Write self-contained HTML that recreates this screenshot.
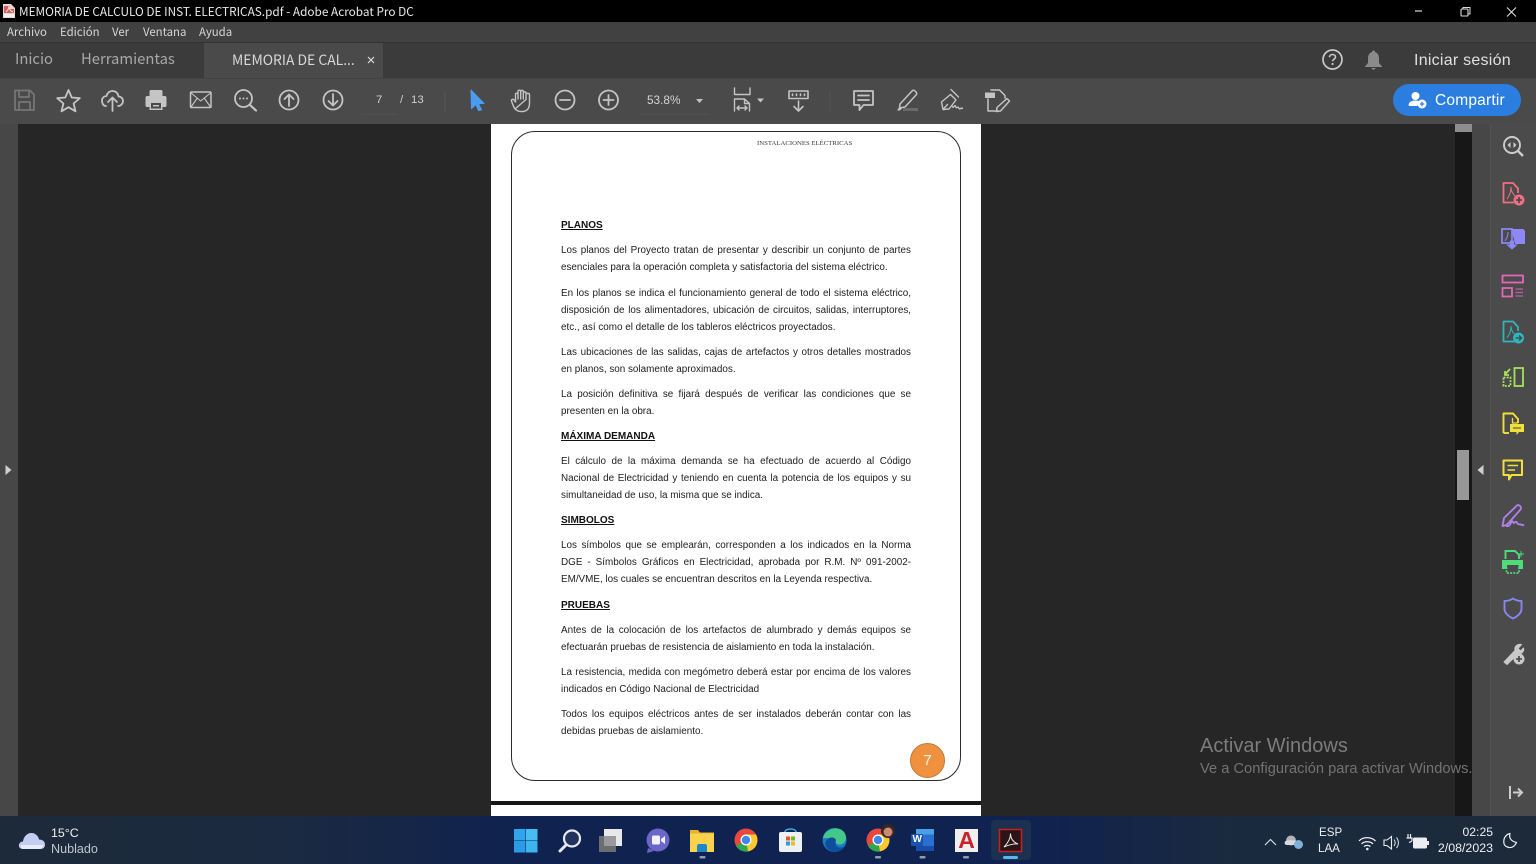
<!DOCTYPE html>
<html lang="es"><head><meta charset="utf-8"><title>MEMORIA DE CALCULO</title>
<style>
html,body{margin:0;padding:0;width:1536px;height:864px;overflow:hidden;background:#262626}
body{position:relative;font-family:"Liberation Sans","DejaVu Sans",sans-serif}
.a{position:absolute}
.t{position:absolute;white-space:nowrap;line-height:1}
.u{font-family:"Noto Sans CJK JP","Liberation Sans",sans-serif}
svg{position:absolute;overflow:visible;fill:none}
.l{position:absolute;left:561px;width:350px;font-size:9.9px;line-height:14px;height:14px;color:#1d1d1d;white-space:nowrap;overflow:hidden}
.j{text-align:justify;text-align-last:justify;white-space:normal}
.h{position:absolute;left:561px;font-size:10px;line-height:14px;font-weight:bold;color:#111;text-decoration:underline;white-space:nowrap}
.tb{stroke:#c4c4c4;stroke-width:1.8;stroke-linejoin:round;stroke-linecap:round}
</style></head><body>
<!-- title bar -->
<div class="a" style="left:0;top:0;width:1536px;height:22px;background:#000"></div>
<svg style="left:3px;top:4px" width="12" height="14" viewBox="0 0 12 14"><path d="M0 0H8L12 4V14H0Z" fill="#e8d8d4"/><path d="M1 2H7V5H11V9H1Z" fill="#d8605a"/><rect x="1" y="10" width="10" height="3" fill="#f2f2f2"/><path d="M3 8C5 6 6 4 6 2C6 5 7 7 10 8" stroke="#fff" stroke-width=".8"/></svg>
<div class="t u" style="left:19px;top:6px;font-size:11.8px;color:#e8e8e8">MEMORIA DE CALCULO DE INST. ELECTRICAS.pdf - Adobe Acrobat Pro DC</div>
<svg style="left:1414px;top:6px" width="110" height="12" viewBox="0 0 110 12"><path d="M1 5H8" stroke="#ddd" stroke-width="1.2"/><rect x="47" y="3" width="7" height="7" rx="1" stroke="#ddd" stroke-width="1.1"/><path d="M49 3V1.500H56V8H54" stroke="#ddd"/><path d="M93 1.500L102 10.500M102 1.500L93 10.500" stroke="#ddd" stroke-width="1.1"/></svg>
<!-- menu bar -->
<div class="a" style="left:0;top:22px;width:1536px;height:20px;background:#414141"></div>
<div class="a" style="left:0;top:42px;width:1536px;height:1px;background:#333"></div>
<div class="t u" style="left:7px;top:27px;font-size:11.4px;color:#d6d6d6">Archivo</div>
<div class="t u" style="left:60px;top:27px;font-size:11.4px;color:#d6d6d6">Edición</div>
<div class="t u" style="left:112px;top:27px;font-size:11.4px;color:#d6d6d6">Ver</div>
<div class="t u" style="left:143px;top:27px;font-size:11.4px;color:#d6d6d6">Ventana</div>
<div class="t u" style="left:199px;top:27px;font-size:11.4px;color:#d6d6d6">Ayuda</div>
<!-- tab bar -->
<div class="a" style="left:0;top:43px;width:1536px;height:35px;background:#3b3b3b"></div>
<div class="a" style="left:204px;top:43px;width:179px;height:35px;background:#4a4a4a"></div>
<div class="t u" style="left:15px;top:52px;font-size:14.8px;color:#a8a8a8">Inicio</div>
<div class="t u" style="left:81px;top:52px;font-size:14.8px;color:#a8a8a8">Herramientas</div>
<div class="t u" style="left:232px;top:54px;font-size:13.9px;color:#d8d8d8">MEMORIA DE CAL...</div>
<svg style="left:367px;top:56px" width="8" height="8" viewBox="0 0 8 8"><path d="M1 1L7 7M7 1L1 7" stroke="#ddd" stroke-width="1.2"/></svg>
<svg style="left:1322px;top:49px" width="21" height="21" viewBox="0 0 21 21"><circle cx="10.500" cy="10.500" r="9.500" stroke="#c8c8c8" stroke-width="1.7"/><path d="M7.500 8.200C7.500 6.500 9 5.500 10.500 5.500C12.300 5.500 13.500 6.600 13.500 8C13.500 10 10.600 10.200 10.600 12.300" stroke="#c8c8c8" stroke-width="1.6"/><circle cx="10.600" cy="15" r="1.100" fill="#c8c8c8"/></svg>
<svg style="left:1364px;top:50px" width="19" height="20" viewBox="0 0 19 20"><path d="M9.500 0.500C10.500 0.500 11 1.200 11 2C14 3 15 5.500 15 8.500V13L18 16.500V17H1V16.500L4 13V8.500C4 5.500 5 3 8 2C8 1.200 8.500 .5 9.500 .5Z" fill="#8a8a8a"/><path d="M7 18H12L9.500 20Z" fill="#8a8a8a"/></svg>
<div class="t" style="left:1414px;top:53px;font-size:16px;color:#e0e0e0;letter-spacing:.25px">Iniciar sesión</div>
<!-- toolbar -->
<div class="a" style="left:0;top:78px;width:1536px;height:46px;background:#4a4a4a"></div>
<div class="a" style="left:0;top:78px;width:1536px;height:1px;background:#424242"></div>
<svg style="left:0;top:78px" width="1040" height="46" viewBox="0 78 1040 46">
<path d="M15 90.500H30L34 94.500V110H15Z M19 91V97H29V91 M19 110V102H30V110" stroke="#777" stroke-width="1.700" stroke-linejoin="round"/>
<path class="tb" d="M68.500 90L71.700 97.500L79.800 98.200L73.600 103.500L75.500 111.300L68.500 107.200L61.500 111.300L63.400 103.500L57.200 98.200L65.300 97.500Z"/>
<path class="tb" d="M106 106H106C102.500 106 102 102 102 100.500C102 97.500 104.500 96 106.500 96C107.500 92.500 110 91 112.500 91C116 91 118.200 93.500 118.500 96.500C121 96.500 123 98.500 123 101C123 104 120.500 106 118 106M112.500 111V97.500M108 102L112.500 97.500L117 102"/>
<path d="M149.500 96V91.500C149.500 90.500 150 90 151 90H161C162 90 162.500 90.500 162.500 91.500V96Z" fill="#c4c4c4"/><path d="M147 96H165C166 96 166.500 97 166.500 98V105.500C166.500 106.500 166 107 165 107H162.500V110H149.500V107H147C146 107 145.500 106.500 145.500 105.500V98C145.500 97 146 96 147 96Z" fill="#c4c4c4"/><rect x="151" y="103" width="10" height="5.500" fill="#4a4a4a"/><rect x="153" y="105" width="6" height="1.500" fill="#c4c4c4"/>
<rect class="tb" x="190.500" y="92" width="20.500" height="15.500" rx="1" style="stroke-width:1.5"/><path class="tb" d="M191 93L200.700 101L210.500 93M191 107L197 98.500M210.500 107L204.500 98.500" style="stroke-width:1.100"/>
<circle class="tb" cx="243.500" cy="98.500" r="8.500"/><path class="tb" d="M250 105L256 110.500" style="stroke-width:2.200"/><circle cx="240" cy="98.500" r="1" fill="#c4c4c4"/><circle cx="243.500" cy="98.500" r="1" fill="#c4c4c4"/><circle cx="247" cy="98.500" r="1" fill="#c4c4c4"/>
<circle class="tb" cx="289" cy="100" r="9.500"/><path class="tb" d="M289 106V94.500M284.500 99L289 94.500L293.500 99"/>
<circle class="tb" cx="333" cy="100" r="9.500"/><path class="tb" d="M333 94V105.500M328.500 101L333 105.500L337.500 101"/>
<path d="M361 114H396" stroke="#535353"/><path d="M445 91V112" stroke="#565656"/>
<path d="M471 90L484 103.500H478.500L481.500 110L478.500 110.500L476 104.500L471.500 108.500Z" fill="#4a9cf0" stroke="#4a9cf0" stroke-linejoin="round"/>
<path class="tb" transform="translate(1 0)" d="M514 109C512.500 107 511.500 104 510.500 101C510 99.500 512 98.500 513 100L514.500 102V94.500C514.500 92.800 517 92.800 517 94.500V99M517 99V91.500C517 89.800 519.700 89.800 519.700 91.500V99M519.700 99V91.500C519.700 90 522.300 90 522.300 91.500V99M522.300 99V93C522.300 91.500 525 91.500 525 93V99.500M525 99.500V94.500C525 93 528.500 93 528.500 94.500V103C528.500 107.500 527 111 522 111.500C518.500 111.800 516 111 514 109Z" style="stroke-width:1.400"/>
<circle class="tb" cx="565" cy="100" r="9.500"/><path class="tb" d="M560 100H570"/>
<circle class="tb" cx="608.500" cy="100" r="9.500"/><path class="tb" d="M603.500 100H613.500M608.500 95V105"/>
<path d="M640 114H708" stroke="#535353"/>
<path d="M696 99H703L699.500 103Z" fill="#c4c4c4"/>
<path class="tb" d="M734.500 88V94.500H750V88M734.500 111V99H744.500L749.500 103.500V111M744.500 99V103.500H749.500M737 108H747M737 108L739 106M737 108L739 110M747 108L745 106M747 108L745 110" style="stroke-width:1.400"/>
<path d="M757 98.500H764L760.500 102.500Z" fill="#c4c4c4"/>
<rect class="tb" x="789" y="91" width="19" height="7.500" style="stroke-width:1.600"/><path class="tb" d="M792.500 94V95.500M796.500 94V95.500M800.500 94V95.500M804.500 94V95.500M798.500 101V111M794 106.500L798.500 111L803 106.500" style="stroke-width:1.600"/>
<path d="M830 91V112" stroke="#565656"/>
<path class="tb" d="M854 91H873V105H863.500L859.500 110V105H854ZM858 95.500H869M858 100H869"/>
<path class="tb" d="M900 104L912.500 90.500C914 89.500 917.500 92.500 916.500 94.500L905 107L899.500 108Z" style="stroke-width:1.500"/><path d="M897 110.500H900L902 108.500L899 107.500Z" fill="#c4c4c4"/><rect x="903" y="108" width="15" height="3" fill="#6a6a6a"/>
<path class="tb" d="M943 109.500L941.500 102L950.500 94.500L956 100L949 109ZM943 109.500L947.500 104.500M951 89.500L958.500 97M952.500 106.500C953.500 109 954.500 104.500 955.500 106C956.500 110 957.500 105 959 108.500C960 110 961 107 962.500 108.500" style="stroke-width:1.400"/>
<path class="tb" d="M991 90H999.500L1005 95.500V98M988 99V111H998M1007 98.500L1009.500 101L1000.500 111L996.500 111.500L997 107.500Z" style="stroke-width:1.500"/><path d="M985 92.500H995V98H985Z" fill="#c4c4c4"/>
</svg>
<div class="t" style="left:376px;top:95px;font-size:11.4px;color:#cfcfcf">7</div>
<div class="t" style="left:400px;top:95px;font-size:11.4px;color:#cfcfcf">/</div>
<div class="t" style="left:411px;top:95px;font-size:11.4px;color:#cfcfcf">13</div>
<div class="t" style="left:647px;top:95px;font-size:11.8px;color:#d4d4d4">53.8%</div>
<!-- share -->
<div class="a" style="left:1393px;top:84px;width:128px;height:32px;border-radius:16px;background:#2b7ee0"></div>
<svg style="left:1408px;top:91px" width="20" height="18" viewBox="0 0 20 18"><circle cx="7.500" cy="5" r="4" fill="#fff"/><path d="M0.500 14C1 10.500 4 9.500 7.500 9.500C9.500 9.500 11 10 12 11L9 15H1Z" fill="#fff"/><circle cx="14" cy="13" r="4.500" fill="#fff"/><path d="M11.800 13H16.200M14 10.800V15.200" stroke="#2b7ee0" stroke-width="1.200"/></svg>
<div class="t" style="left:1435px;top:93px;font-size:15.5px;color:#fff;letter-spacing:.2px">Compartir</div>
<!-- side panels -->
<div class="a" style="left:0;top:124px;width:18px;height:692px;background:#474747"></div>
<svg style="left:5px;top:465px" width="7" height="10" viewBox="0 0 7 10"><path d="M0.500 0L6.500 5L0.500 10Z" fill="#d0d0d0"/></svg>
<div class="a" style="left:1455px;top:124px;width:17px;height:692px;background:#171717"></div>
<div class="a" style="left:1455px;top:124px;width:17px;height:8px;background:#8e8e8e"></div>
<div class="a" style="left:1457px;top:450px;width:12px;height:50px;background:#979797"></div>
<div class="a" style="left:1472px;top:124px;width:18px;height:692px;background:#474747"></div>
<div class="a" style="left:1490px;top:124px;width:46px;height:692px;background:#4b4b4b;border-left:1px solid #525252;box-sizing:border-box"></div>
<svg style="left:1477px;top:465px" width="7" height="10" viewBox="0 0 7 10"><path d="M6.500 0L0.500 5L6.500 10Z" fill="#d0d0d0"/></svg>
<svg style="left:1490px;top:124px" width="46" height="692" viewBox="1490 124 46 692">
<circle cx="1512" cy="145" r="8" stroke="#ccc" stroke-width="1.900"/><path d="M1518 151L1523 156" stroke="#ccc" stroke-width="2.400"/><path d="M1510.500 142L1507.500 145L1510.500 148ZM1513.500 142L1516.500 145L1513.500 148Z" fill="#ccc"/>
<path d="M1514 202.500H1503.500V183H1513L1518 188.500V193" stroke="#ef6f83" stroke-width="1.800" stroke-linejoin="round"/><path d="M1507 199C1510 195 1511 191 1511 187C1511 191 1513 194 1515 196" stroke="#ef6f83"/><circle cx="1519" cy="200" r="5.500" fill="#ef6f83"/><path d="M1516 200H1522M1519 197V203" stroke="#444" stroke-width="1.600"/>
<path d="M1511.500 229H1523.500L1525 231V244H1515Z" fill="#8d88f5"/><path d="M1502 229H1512V243H1502Z" fill="#4b4b4b" stroke="#8d88f5" stroke-width="1.700"/><path d="M1505 241C1508 237 1508 234 1508 232" stroke="#8d88f5"/><path d="M1510.500 241V245H1507.500L1512 249L1516.500 245H1513.500V241Z" fill="#8d88f5" stroke="#8d88f5"/>
<rect x="1502.500" y="275.500" width="20.500" height="7" stroke="#e267b5" stroke-width="1.800"/><rect x="1502.500" y="288" width="9.500" height="8.500" stroke="#e267b5" stroke-width="1.800"/><path d="M1515.500 289H1523M1515.500 292.500H1523M1515.500 296H1523" stroke="#b95f9a" stroke-width="1.200"/>
<path d="M1515 341.500H1503.500V321.500H1513L1518 327V331" stroke="#2eb5bd" stroke-width="1.800" stroke-linejoin="round"/><path d="M1507 338C1510 334 1511 330 1511 326C1511 330 1513 333 1515 335" stroke="#2eb5bd"/><circle cx="1518.500" cy="338" r="5.500" fill="#2eb5bd"/><path d="M1515.500 338H1521M1519 335.500L1521.500 338L1519 340.500" stroke="#444" stroke-width="1.300"/>
<rect x="1514.500" y="368" width="8.500" height="18" stroke="#a8e05a" stroke-width="1.800"/><path d="M1510 369L1505 374.500M1505 371V375H1509" stroke="#a8e05a" stroke-width="1.800"/><path d="M1503.500 377.500H1510.500V386H1503.500Z" stroke="#a8e05a" stroke-width="1.800" stroke-dasharray="2 1.200"/>
<path d="M1503.500 433V413.500H1513L1518 419V423" stroke="#f1e03c" stroke-width="1.900" stroke-linejoin="round"/><path d="M1503.500 433H1509" stroke="#f1e03c" stroke-width="1.900"/><path d="M1512.500 418V423H1518" stroke="#f1e03c" stroke-width="1.300"/><path d="M1510 424H1524V432H1519L1516.500 435V432H1510Z" fill="#f1e03c"/><path d="M1513 428H1521" stroke="#444"/>
<path d="M1503.500 460.500H1522V475H1511.500L1509 479.500V475H1503.500Z" stroke="#f1e03c" stroke-width="2" stroke-linejoin="round"/><path d="M1507.500 465.500H1518M1507.500 470H1515" stroke="#f1e03c" stroke-width="1.600"/>
<path d="M1502.500 526L1504 518L1517 505.500C1519 504 1522 507 1520.500 509.500L1508.500 523C1507 524.500 1505 526 1502.500 526ZM1506 526H1508.500C1511 525 1511.500 519 1513 522C1514 525 1515.500 520 1517 522.500C1518 525.500 1520 523.500 1524 525.500" stroke="#b07fe8" stroke-width="1.900" stroke-linejoin="round"/>
<path d="M1505.500 559V551H1515L1519 555V559" stroke="#4fdb7a" stroke-width="1.900"/><path d="M1502 560H1523V569H1518.500V565H1507V569H1502Z" fill="#4fdb7a"/><path d="M1506.500 567V573H1519V567" stroke="#4fdb7a" stroke-width="1.700" stroke-dasharray="2 1.200"/><path d="M1521 551V557M1518 554H1524" stroke="#4fdb7a" stroke-width=".9"/>
<path d="M1513 598.500C1516 600.500 1519 601 1521.500 601V609C1521.500 613 1517.500 616.500 1513 618.500C1508.500 616.500 1504.500 613 1504.500 609V601C1507 601 1510 600.500 1513 598.500Z" stroke="#8987ef" stroke-width="1.900" stroke-linejoin="round"/>
<path d="M1504 662L1515 650.500C1514 646.500 1517.500 643.500 1521.500 644.500L1518 648.500L1520.500 651L1523.500 648C1524.500 650.500 1522.500 654 1518 654L1507 664.500Z" fill="#c9c9c9" stroke="#c9c9c9" stroke-linejoin="round"/>
<circle cx="1519" cy="659" r="5.500" fill="#c9c9c9"/><path d="M1516 659H1522M1519 656V662" stroke="#444" stroke-width="1.600"/>
<path d="M1510 786V799" stroke="#ccc" stroke-width="2"/><path d="M1513 792.500H1521.500M1518 788.500L1522 792.500L1518 796.500" stroke="#ccc" stroke-width="2"/>
</svg>
<!-- page -->
<div class="a" style="left:491px;top:124px;width:490px;height:692px;background:#fff"></div>
<div class="a" style="left:491px;top:801px;width:490px;height:4px;background:#161616"></div>
<div class="a" style="left:511px;top:130.500px;width:450px;height:650px;box-sizing:border-box;border:1.700px solid #2b2b2b;border-radius:24px"></div>
<div class="t" style="left:757px;top:139.500px;font-family:'Liberation Serif',serif;font-size:6.75px;color:#3a3a3a;padding-top:1.500px">INSTALACIONES ELÉCTRICAS</div>
<div class="h" style="top:217px;margin-top:1.500px">PLANOS</div>
<div class="l j" style="top:244px">Los planos del Proyecto tratan de presentar y describir un conjunto de partes</div>
<div class="l" style="top:261px">esenciales para la operación completa y satisfactoria del sistema eléctrico.</div>
<div class="l j" style="top:287px">En los planos se indica el funcionamiento general de todo el sistema eléctrico,</div>
<div class="l j" style="top:304px">disposición de los alimentadores, ubicación de circuitos, salidas, interruptores,</div>
<div class="l" style="top:321px">etc., así como el detalle de los tableros eléctricos proyectados.</div>
<div class="l j" style="top:346px">Las ubicaciones de las salidas, cajas de artefactos y otros detalles mostrados</div>
<div class="l" style="top:363px">en planos, son solamente aproximados.</div>
<div class="l j" style="top:388px">La posición definitiva se fijará después de verificar las condiciones que se</div>
<div class="l" style="top:405px">presenten en la obra.</div>
<div class="h" style="top:430px">MÁXIMA DEMANDA</div>
<div class="l j" style="top:455px">El cálculo de la máxima demanda se ha efectuado de acuerdo al Código</div>
<div class="l j" style="top:472px">Nacional de Electricidad y teniendo en cuenta la potencia de los equipos y su</div>
<div class="l" style="top:489px">simultaneidad de uso, la misma que se indica.</div>
<div class="h" style="top:514px">SIMBOLOS</div>
<div class="l j" style="top:539px">Los símbolos que se emplearán, corresponden a los indicados en la Norma</div>
<div class="l j" style="top:556px">DGE - Símbolos Gráficos en Electricidad, aprobada por R.M. Nº 091-2002-</div>
<div class="l" style="top:573px">EM/VME, los cuales se encuentran descritos en la Leyenda respectiva.</div>
<div class="h" style="top:599px">PRUEBAS</div>
<div class="l j" style="top:624px">Antes de la colocación de los artefactos de alumbrado y demás equipos se</div>
<div class="l" style="top:641px">efectuarán pruebas de resistencia de aislamiento en toda la instalación.</div>
<div class="l j" style="top:666px">La resistencia, medida con megómetro deberá estar por encima de los valores</div>
<div class="l" style="top:683px">indicados en Código Nacional de Electricidad</div>
<div class="l j" style="top:708px">Todos los equipos eléctricos antes de ser instalados deberán contar con las</div>
<div class="l" style="top:725px">debidas pruebas de aislamiento.</div>
<div class="a" style="left:910px;top:743px;width:35px;height:35px;box-sizing:border-box;border-radius:50%;background:#f0913f;border:1.500px solid #c47a38;color:#fff5e8;font-size:15px;line-height:33px;text-align:center">7</div>
<!-- watermark -->
<div class="t" style="left:1200px;top:736px;font-size:20px;color:#7c7c7c">Activar Windows</div>
<div class="t" style="left:1200px;top:762px;font-size:14.6px;color:#737373;letter-spacing:.04px">Ve a Configuración para activar Windows.</div>
<!-- taskbar -->
<div class="a" style="left:0;top:816px;width:1536px;height:48px;background:linear-gradient(90deg,#1c2a3a 0,#1b2a40 280px,#0f2250 520px,#10224f 1040px,#1a2a3e 1240px,#1c2a3a 1536px)"></div>
<svg style="left:18px;top:830px" width="28" height="20" viewBox="0 0 28 20"><path d="M5 19C1.500 19 .5 16.500 1 14.500C1.500 12.500 3.500 11.500 5 11.500C5.500 6.500 9.500 2.500 14 3C18 3.500 20.500 6.500 21 9.500C24.500 9.500 27 11.500 27 14.500C27 17.500 25 19 22.500 19Z" fill="#c3cdf0"/><path d="M3 15H25C25 17.500 23 19 22 19H5C3.500 19 2.500 17 3 15Z" fill="#e8ecfa"/></svg>
<div class="t" style="left:51px;top:827px;font-size:12.4px;color:#f0f0f0">15°C</div>
<div class="t" style="left:51px;top:843px;font-size:12.6px;color:#bfc6ce">Nublado</div>
<div class="a" style="left:991px;top:820px;width:40px;height:40px;border-radius:4px;background:#1c3150"></div>
<svg style="left:500px;top:816px" width="540" height="48" viewBox="500 816 540 48">
<rect x="514" y="829" width="11.500" height="11.500" fill="#2fa6ec"/><rect x="526" y="829" width="11.500" height="11.500" fill="#47bdf4"/><rect x="514" y="841" width="11.500" height="11.500" fill="#2a9ce6"/><rect x="526" y="841" width="11.500" height="11.500" fill="#3cb4f0"/>
<circle cx="572" cy="838.500" r="8" fill="#22345c" stroke="#e6eaf0" stroke-width="2.200"/><path d="M566 845L560 851" stroke="#e6eaf0" stroke-width="3" stroke-linecap="round"/>
<rect x="604" y="829" width="18" height="17" fill="#e8e8ea"/><rect x="599" y="836" width="17" height="16" fill="#6c6d70"/><rect x="604" y="836" width="12" height="10" fill="#9a9a9c"/>
<circle cx="658" cy="840" r="11.500" fill="#6a67c8"/><path d="M648 848L647 853L654 851Z" fill="#6a67c8"/><rect x="652" y="835.500" width="8" height="9" rx="1.500" fill="#f2f2f8"/><path d="M661 839L665 836V844L661 841Z" fill="#f2f2f8"/>
<path d="M690 830H698L700 832.500H714V842H690Z" fill="#e8b32c"/><rect x="690" y="833.500" width="24" height="18.500" fill="#fbd24c"/><path d="M697 852V846C697 845 698 844 699 844H705C706 844 707 845 707 846V852Z" fill="#1d86c8"/>
<circle cx="746" cy="840" r="11.500" fill="#e6483e"/><path d="M746 840L736 846A11.500 11.500 0 0 0 748 851.500Z" fill="#2fa84f"/><path d="M746 840L748 851.500A11.500 11.500 0 0 0 756 834.500L746 834.500Z" fill="#fbc82d"/><circle cx="746" cy="840" r="5.500" fill="#fff"/><circle cx="746" cy="840" r="4.200" fill="#3f87e8"/>
<path d="M785 832C785 828 796 828 796 832" stroke="#3ab0e6" stroke-width="1.500"/><rect x="779" y="832" width="23" height="20" rx="2" fill="#eef1f4"/><rect x="786" y="836.500" width="4" height="4" fill="#e8522a"/><rect x="791" y="836.500" width="4" height="4" fill="#7ab828"/><rect x="786" y="841.500" width="4" height="4" fill="#2a9ce6"/><rect x="791" y="841.500" width="4" height="4" fill="#f8b820"/>
<circle cx="834.500" cy="840" r="12" fill="#1a7cc8"/><path d="M823 838C825 829 838 825 844 832C847 836 847 842 842 844C838 846 834 843 836 840C832 838 826 838 823 838Z" fill="#43c88a"/><path d="M836 840C834 845 838 850 845 846C842 851 836 853 831 851C826 849 824 844 826 841C829 836 835 837 836 840Z" fill="#0d4f9e"/>
<circle cx="878" cy="840" r="11.500" fill="#e6483e"/><path d="M878 840L868 846A11.500 11.500 0 0 0 880 851.500Z" fill="#2fa84f"/><path d="M878 840L880 851.500A11.500 11.500 0 0 0 888 834.500L878 834.500Z" fill="#fbc82d"/><circle cx="878" cy="840" r="5.500" fill="#fff"/><circle cx="878" cy="840" r="4.200" fill="#3f87e8"/><circle cx="888" cy="831" r="7" fill="#3a2620"/><circle cx="888" cy="832" r="4.500" fill="#c98a78"/>
<rect x="916" y="829" width="18" height="22" rx="1" fill="#2a6fd0"/><rect x="916" y="829" width="18" height="5.500" fill="#47a0e8"/><rect x="916" y="846" width="18" height="5" fill="#174ea8"/><rect x="911" y="834" width="12" height="12" rx="1" fill="#1a55ad"/>
<rect x="955" y="829" width="23" height="23" fill="#f0efee"/>
<rect x="999.500" y="829.500" width="22" height="22" fill="#2a1416" stroke="#c8201e" stroke-width="1.500"/><path d="M1004 847C1008 843 1010.500 838 1010.500 833.500C1010.500 838 1013 842 1018 844C1014 843.500 1008 845 1004 847Z" stroke="#e8e8e8" stroke-width="1"/>
<rect x="699.500" y="856" width="6" height="2.500" rx="1" fill="#8f9bb0"/><rect x="875" y="856" width="6" height="2.500" rx="1" fill="#8f9bb0"/><rect x="919.500" y="856" width="6" height="2.500" rx="1" fill="#8f9bb0"/><rect x="963" y="856" width="6" height="2.500" rx="1" fill="#8f9bb0"/><rect x="1003" y="856" width="15" height="3" rx="1.500" fill="#58b8ec"/>
</svg>
<div class="t" style="left:956px;top:829px;font-size:23px;font-weight:bold;color:#c8232c;width:21px;text-align:center">A</div>
<div class="t" style="left:912.500px;top:835px;font-size:10px;font-weight:bold;color:#fff">W</div>
<!-- tray -->
<svg style="left:1260px;top:826px" width="190" height="30" viewBox="0 0 190 30">
<path d="M5 19L10.500 13.500L16 19" stroke="#dfe3e8" stroke-width="1.100"/>
<circle cx="31" cy="14.500" r="5" fill="#b0b4ba"/><path d="M27 19C25 19 24 17.500 25 15.500C27 14 33 14 36 15V19Z" fill="#d8dade"/><circle cx="38.500" cy="18.500" r="4.500" fill="#7fb0d8"/>
<path d="M99 15C103 10.500 111 10.500 115.500 15M101.500 18C104 15 110.500 15 113 18M104 20.500C105.500 19 109 19 110.500 20.500" stroke="#eceff2" stroke-width="1.300"/><circle cx="107.300" cy="23" r="1.300" fill="#eceff2"/>
<path d="M124 14H127L131.500 10.500V23L127 19.500H124Z" stroke="#eceff2" stroke-width="1.100"/><path d="M134 13.500C135.500 15.500 135.500 18 134 20M136.500 11.500C139 14.500 139 19 136.500 22" stroke="#dfe3e8" stroke-width="1"/>
<rect x="153" y="11.500" width="14" height="11" rx="1.500" fill="#eceff2"/><rect x="167" y="15" width="2" height="4" fill="#eceff2"/><path d="M148 12V8M150.500 12V8M146.500 12H152V14C152 16 150 16 149 16.500" stroke="#eceff2" stroke-width="1.200"/>
</svg>
<div class="t" style="left:1319px;top:827px;font-size:11.6px;color:#eceff2">ESP</div>
<div class="t" style="left:1318px;top:843px;font-size:11.6px;color:#eceff2">LAA</div>
<div class="t" style="right:43px;top:826px;font-size:12.2px;color:#eceff2">02:25</div>
<div class="t" style="right:43px;top:842px;font-size:12.4px;color:#eceff2">2/08/2023</div>
<svg style="left:1503px;top:832px" width="15" height="17" viewBox="0 0 15 17"><path d="M7 1.500C6 5 7 9 13.500 10.500C12 14 9 16 6 15.500C2.500 15 .5 12.500 .8 9C1 5 4 2 7 1.500Z" stroke="#eceff2" stroke-width="1.200" stroke-linejoin="round"/></svg>
</body></html>
